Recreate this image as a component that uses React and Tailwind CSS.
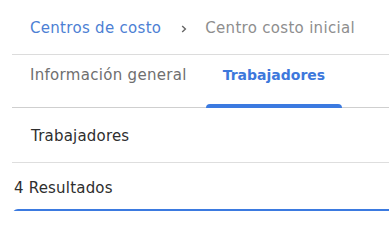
export default function App() {
  const font = { fontFamily: '"DejaVu Sans", sans-serif' };
  return (
    <div className="w-[389px] h-[211px] bg-white overflow-hidden" style={font}>
      <div className="flex items-center h-[54px] pl-[30px] pt-[2px] text-[15px] tracking-[0.3px]">
        <span className="text-[#4d7fd4]">Centros de costo</span>
        <svg className="ml-[20px] mr-[18px] mt-[1px]" width="6" height="8" viewBox="0 0 6 8">
          <path d="M1.2 1 L4.4 4 L1.2 7" fill="none" stroke="#666" strokeWidth="1.4" />
        </svg>
        <span className="text-[#8e8e8e]">Centro costo inicial</span>
      </div>
      <div className="ml-[12px] border-t border-[#dcdcdc]">
        <div className="flex h-[53px] border-b border-[#cfcfcf] pl-[1px]">
          <div className="relative flex items-center px-[17px] text-[15px] tracking-[0.3px] text-[#6f6f6f] pb-[11px]">
            Información general
          </div>
          <div className="relative flex items-center px-[17px] ml-[2px] text-[14px] font-semibold text-[#3d78dc] pb-[11px]">
            Trabajadores
            <div className="absolute left-0 right-0 bottom-[-1px] h-[4px] rounded-t-[4px] bg-[#3b7ae0]" />
          </div>
        </div>
        <div className="flex items-center h-[55px] pl-[19px] pt-[3px] text-[15px] tracking-[0.2px] text-[#2e2e2e] border-b border-[#dedede]">
          Trabajadores
        </div>
        <div className="flex items-center h-[46px] pl-[2px] pt-[5px] text-[15px] tracking-[0.2px] text-[#2e2e2e]">
          4 Resultados
        </div>
        <div className="h-[10px] border-t-2 border-l-2 border-[#3b7ae0] rounded-tl-[6px] border-l-transparent" />
      </div>
    </div>
  );
}
